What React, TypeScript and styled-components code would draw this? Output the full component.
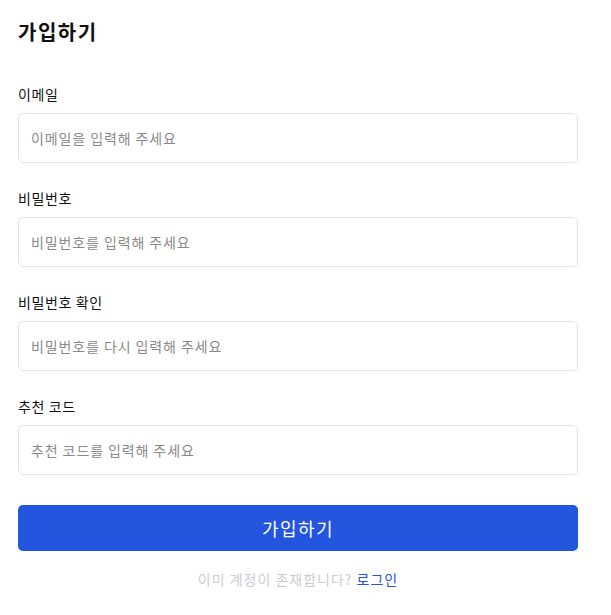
import styled, { createGlobalStyle } from "styled-components";

const GlobalStyle = createGlobalStyle`
  body {
    margin: 0;
    background: #ffffff;
    font-family: "Noto Sans CJK KR", "Noto Sans", sans-serif;
    color: #111111;
  }
  * {
    box-sizing: border-box;
  }
`;

const fields = [
  { label: "이메일", placeholder: "이메일을 입력해 주세요", type: "email" },
  { label: "비밀번호", placeholder: "비밀번호를 입력해 주세요", type: "password" },
  { label: "비밀번호 확인", placeholder: "비밀번호를 다시 입력해 주세요", type: "password" },
  { label: "추천 코드", placeholder: "추천 코드를 입력해 주세요", type: "text" },
];

const App = () => {
  return (
    <>
      <GlobalStyle />
      <Container>
        <Title>가입하기</Title>
        <Form>
          {fields.map((f) => (
            <Field key={f.label}>
              <Label>{f.label}</Label>
              <Input type={f.type} placeholder={f.placeholder} />
            </Field>
          ))}
          <Button type="button">가입하기</Button>
        </Form>
        <Footer>
          이미 계정이 존재합니다? <LoginLink href="#">로그인</LoginLink>
        </Footer>
      </Container>
    </>
  );
};

export default App;

const Container = styled.div`
  width: 596px;
  padding: 17px 18px 0 18px;
`;

const Title = styled.h1`
  margin: 0;
  font-size: 20px;
  font-weight: 700;
  line-height: 30px;
  letter-spacing: 1.5px;
`;

const Form = styled.div`
  display: flex;
  flex-direction: column;
  gap: 25px;
  margin-top: 37px;
`;

const Field = styled.div`
  display: flex;
  flex-direction: column;
  gap: 8px;
`;

const Label = styled.label`
  font-size: 14px;
  line-height: 21px;
  letter-spacing: 0.6px;
  color: #111111;
`;

const Input = styled.input`
  width: 100%;
  height: 50px;
  padding: 0 12px;
  border: 1px solid #e2e2e2;
  border-radius: 5px;
  font-family: inherit;
  font-size: 14px;
  letter-spacing: 0.9px;
  outline: none;
  &::placeholder {
    color: #8a8a8a;
  }
`;

const Button = styled.button`
  margin-top: 5px;
  height: 46px;
  border: none;
  border-radius: 5px;
  background: #2355de;
  color: #ffffff;
  font-family: inherit;
  font-size: 18px;
  letter-spacing: 1.5px;
  cursor: pointer;
`;

const Footer = styled.div`
  margin-top: 18px;
  text-align: center;
  font-size: 14px;
  line-height: 21px;
  letter-spacing: 1px;
  color: #c9ccd3;
`;

const LoginLink = styled.a`
  color: #2355de;
  text-decoration: none;
`;
